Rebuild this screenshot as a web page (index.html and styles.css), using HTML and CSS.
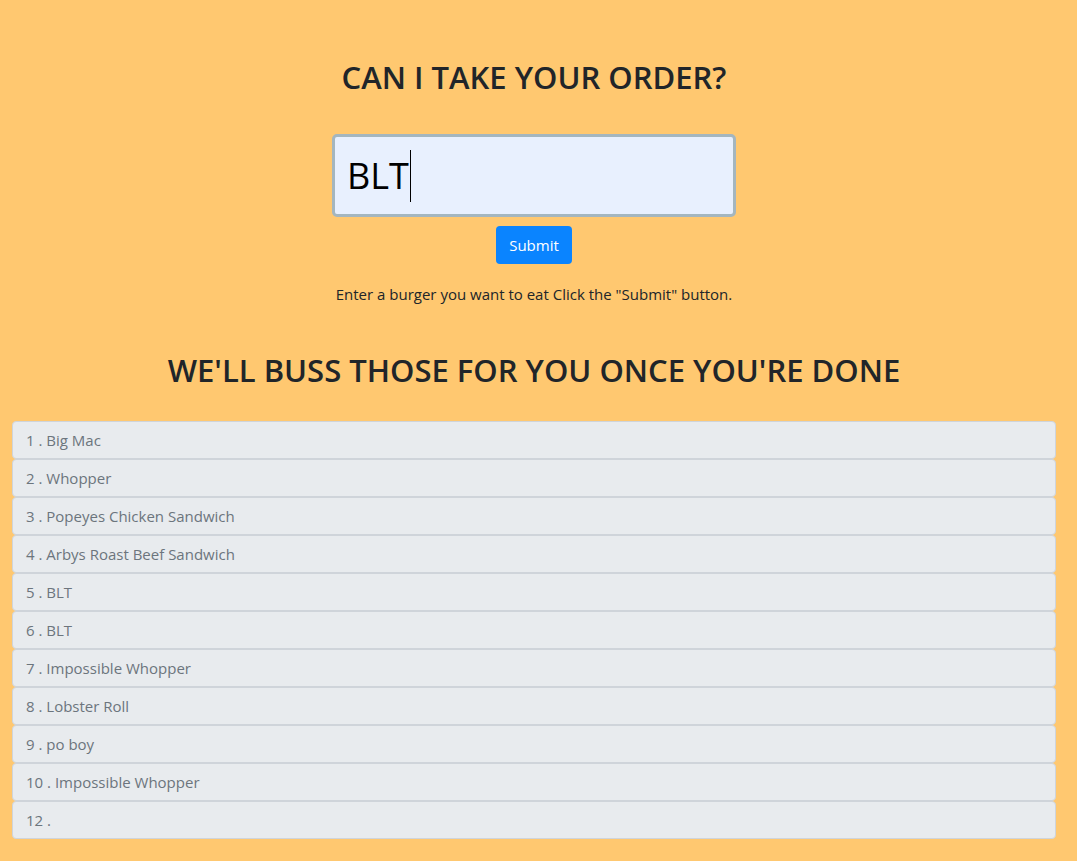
FILE: index.html
```html
<!DOCTYPE html>
<html>
<head>
<meta charset="utf-8">
<link rel="stylesheet" href="styles.css">
</head>
<body>
<main class="page">
  <h1 class="title">CAN I TAKE YOUR ORDER?</h1>
  <form class="order-form">
    <div class="order-input"><span class="order-value">BLT</span><span class="caret"></span></div>
    <button type="button" class="btn-submit">Submit</button>
  </form>
  <p class="hint">Enter a burger you want to eat Click the "Submit" button.</p>
  <h2 class="title title-list">WE'LL BUSS THOSE FOR YOU ONCE YOU'RE DONE</h2>
  <ul class="orders">
    <li class="order">1 . Big Mac</li>
    <li class="order">2 . Whopper</li>
    <li class="order">3 . Popeyes Chicken Sandwich</li>
    <li class="order">4 . Arbys Roast Beef Sandwich</li>
    <li class="order">5 . BLT</li>
    <li class="order">6 . BLT</li>
    <li class="order">7 . Impossible Whopper</li>
    <li class="order">8 . Lobster Roll</li>
    <li class="order">9 . po boy</li>
    <li class="order">10 . Impossible Whopper</li>
    <li class="order">12 .</li>
  </ul>
</main>
</body>
</html>
```
FILE: styles.css
```css
html, body {
  margin: 0;
  padding: 0;
  background: #ffc870;
}
body {
  font-family: "Open Sans", "Noto Sans", sans-serif;
  color: #212529;
}
.page {
  padding: 59px 21px 20px 12px;
  display: flex;
  flex-direction: column;
  align-items: center;
}
.title {
  margin: 0;
  font-size: 31px;
  font-weight: 600;
  line-height: 1.2;
  text-align: center;
  color: #212529;
}
.order-form {
  margin-top: 38px;
  display: flex;
  flex-direction: column;
  align-items: center;
  gap: 9px;
}
.order-input {
  box-sizing: border-box;
  width: 404px;
  height: 83px;
  border: 3px solid #a4b6bf;
  border-radius: 5px;
  background: #e8f0fe;
  display: flex;
  align-items: center;
  padding-left: 12px;
  font-size: 36px;
  color: #000;
}
.caret {
  width: 1px;
  height: 52px;
  background: #000;
  margin-left: 1px;
}
.btn-submit {
  box-sizing: border-box;
  width: 76px;
  height: 38px;
  border: none;
  border-radius: 4px;
  background: #0a84ff;
  color: #fff;
  font-family: inherit;
  font-size: 15px;
}
.hint {
  margin: 20px 0 0;
  font-size: 15px;
  line-height: 20px;
}
.title-list {
  margin-top: 48px;
}
.orders {
  list-style: none;
  margin: 32px 0 0;
  padding: 0;
  align-self: stretch;
}
.order {
  box-sizing: border-box;
  height: 38px;
  border: 1px solid #cfd4da;
  border-radius: 4px;
  background: #e8ebee;
  color: #6c757d;
  font-size: 15px;
  line-height: 36px;
  padding-left: 13px;
}
```
